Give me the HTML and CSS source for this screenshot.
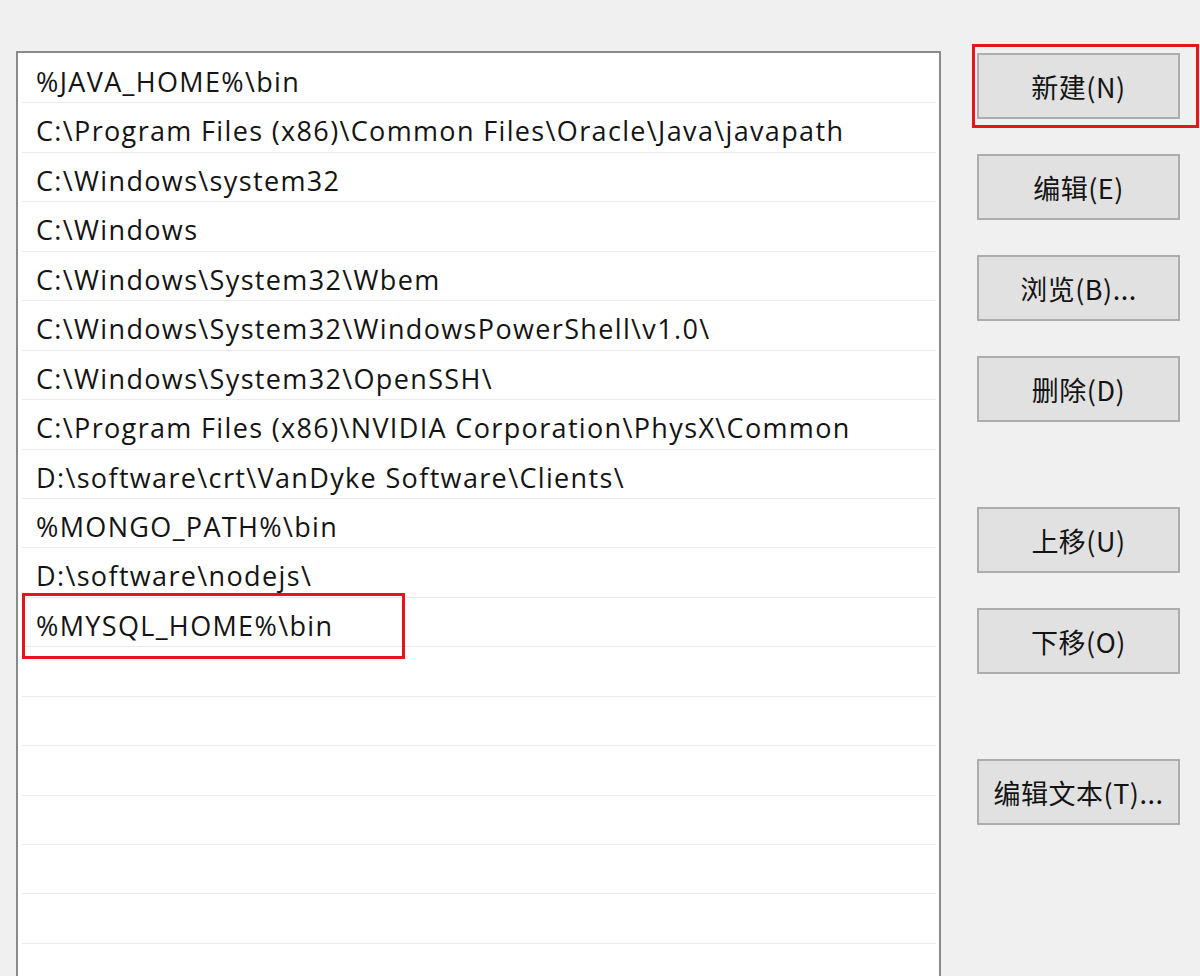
FILE: index.html
```html
<!DOCTYPE html>
<html lang="zh-CN">
<head>
  <meta charset="UTF-8" />
  <title>编辑环境变量</title>
  <link rel="stylesheet" href="styles.css">
</head>
<body>
  <div class="dialog">
    <div class="path-list">
      <div class="row">%JAVA_HOME%\bin</div>
      <div class="row">C:\Program Files (x86)\Common Files\Oracle\Java\javapath</div>
      <div class="row">C:\Windows\system32</div>
      <div class="row">C:\Windows</div>
      <div class="row">C:\Windows\System32\Wbem</div>
      <div class="row">C:\Windows\System32\WindowsPowerShell\v1.0\</div>
      <div class="row">C:\Windows\System32\OpenSSH\</div>
      <div class="row">C:\Program Files (x86)\NVIDIA Corporation\PhysX\Common</div>
      <div class="row">D:\software\crt\VanDyke Software\Clients\</div>
      <div class="row">%MONGO_PATH%\bin</div>
      <div class="row">D:\software\nodejs\</div>
      <div class="row marked">%MYSQL_HOME%\bin<span class="mark mark-row"></span></div>
      <div class="row"></div>
      <div class="row"></div>
      <div class="row"></div>
      <div class="row"></div>
      <div class="row"></div>
      <div class="row"></div>
      <div class="row"></div>
    </div>

    <div class="actions">
      <button class="btn marked">新建(N)<span class="mark mark-btn"></span></button>
      <button class="btn">编辑(E)</button>
      <button class="btn">浏览(B)...</button>
      <button class="btn">删除(D)</button>
      <div class="spacer"></div>
      <button class="btn">上移(U)</button>
      <button class="btn">下移(O)</button>
      <div class="spacer"></div>
      <button class="btn">编辑文本(T)...</button>
    </div>
  </div>
</body>
</html>
```

FILE: styles.css
```css
:root {
  --bg: #f0f0f0;
  --list-border: #8a8a8a;
  --row-line: #ebebeb;
  --btn-bg: #e1e1e1;
  --btn-border: #adadad;
  --text: #141414;
  --mark: #e8141b;
}

html, body {
  margin: 0;
  height: 100%;
  overflow: hidden;
}

body {
  background-color: var(--bg);
  color: var(--text);
  font-family: "Open Sans", "Noto Sans CJK SC", sans-serif;
}

.dialog {
  display: flex;
  align-items: flex-start;
  padding: 51px 0 0 16px;
}

.path-list {
  width: 921px;
  height: 960px;
  padding-top: 1px;
  background-color: #fff;
  border: 2px solid var(--list-border);
  flex-shrink: 0;
}

.row {
  position: relative;
  box-sizing: border-box;
  height: 49.45px;
  margin: 0 3px 0 4px;
  padding-left: 14px;
  border-bottom: 1px solid var(--row-line);
  font-size: 27px;
  font-weight: 500;
  letter-spacing: 1.35px;
  line-height: 56px;
  white-space: nowrap;
}

.actions {
  display: flex;
  flex-direction: column;
  gap: 35px;
  margin: 2px 0 0 36px;
  width: 203px;
}

.spacer {
  height: 15px;
}

.btn {
  position: relative;
  height: 66px;
  background-color: var(--btn-bg);
  border: 2px solid var(--btn-border);
  color: var(--text);
  font-family: "Noto Sans CJK SC", sans-serif;
  font-size: 27px;
  letter-spacing: 0.5px;
  padding: 0;
  cursor: pointer;
}

.mark {
  position: absolute;
  border: 3px solid var(--mark);
  box-sizing: border-box;
  pointer-events: none;
}

.mark-btn {
  top: -11px;
  left: -7px;
  right: -21px;
  bottom: -11px;
}

.mark-row {
  top: -5px;
  left: 0;
  width: 383px;
  height: 66px;
}
```
